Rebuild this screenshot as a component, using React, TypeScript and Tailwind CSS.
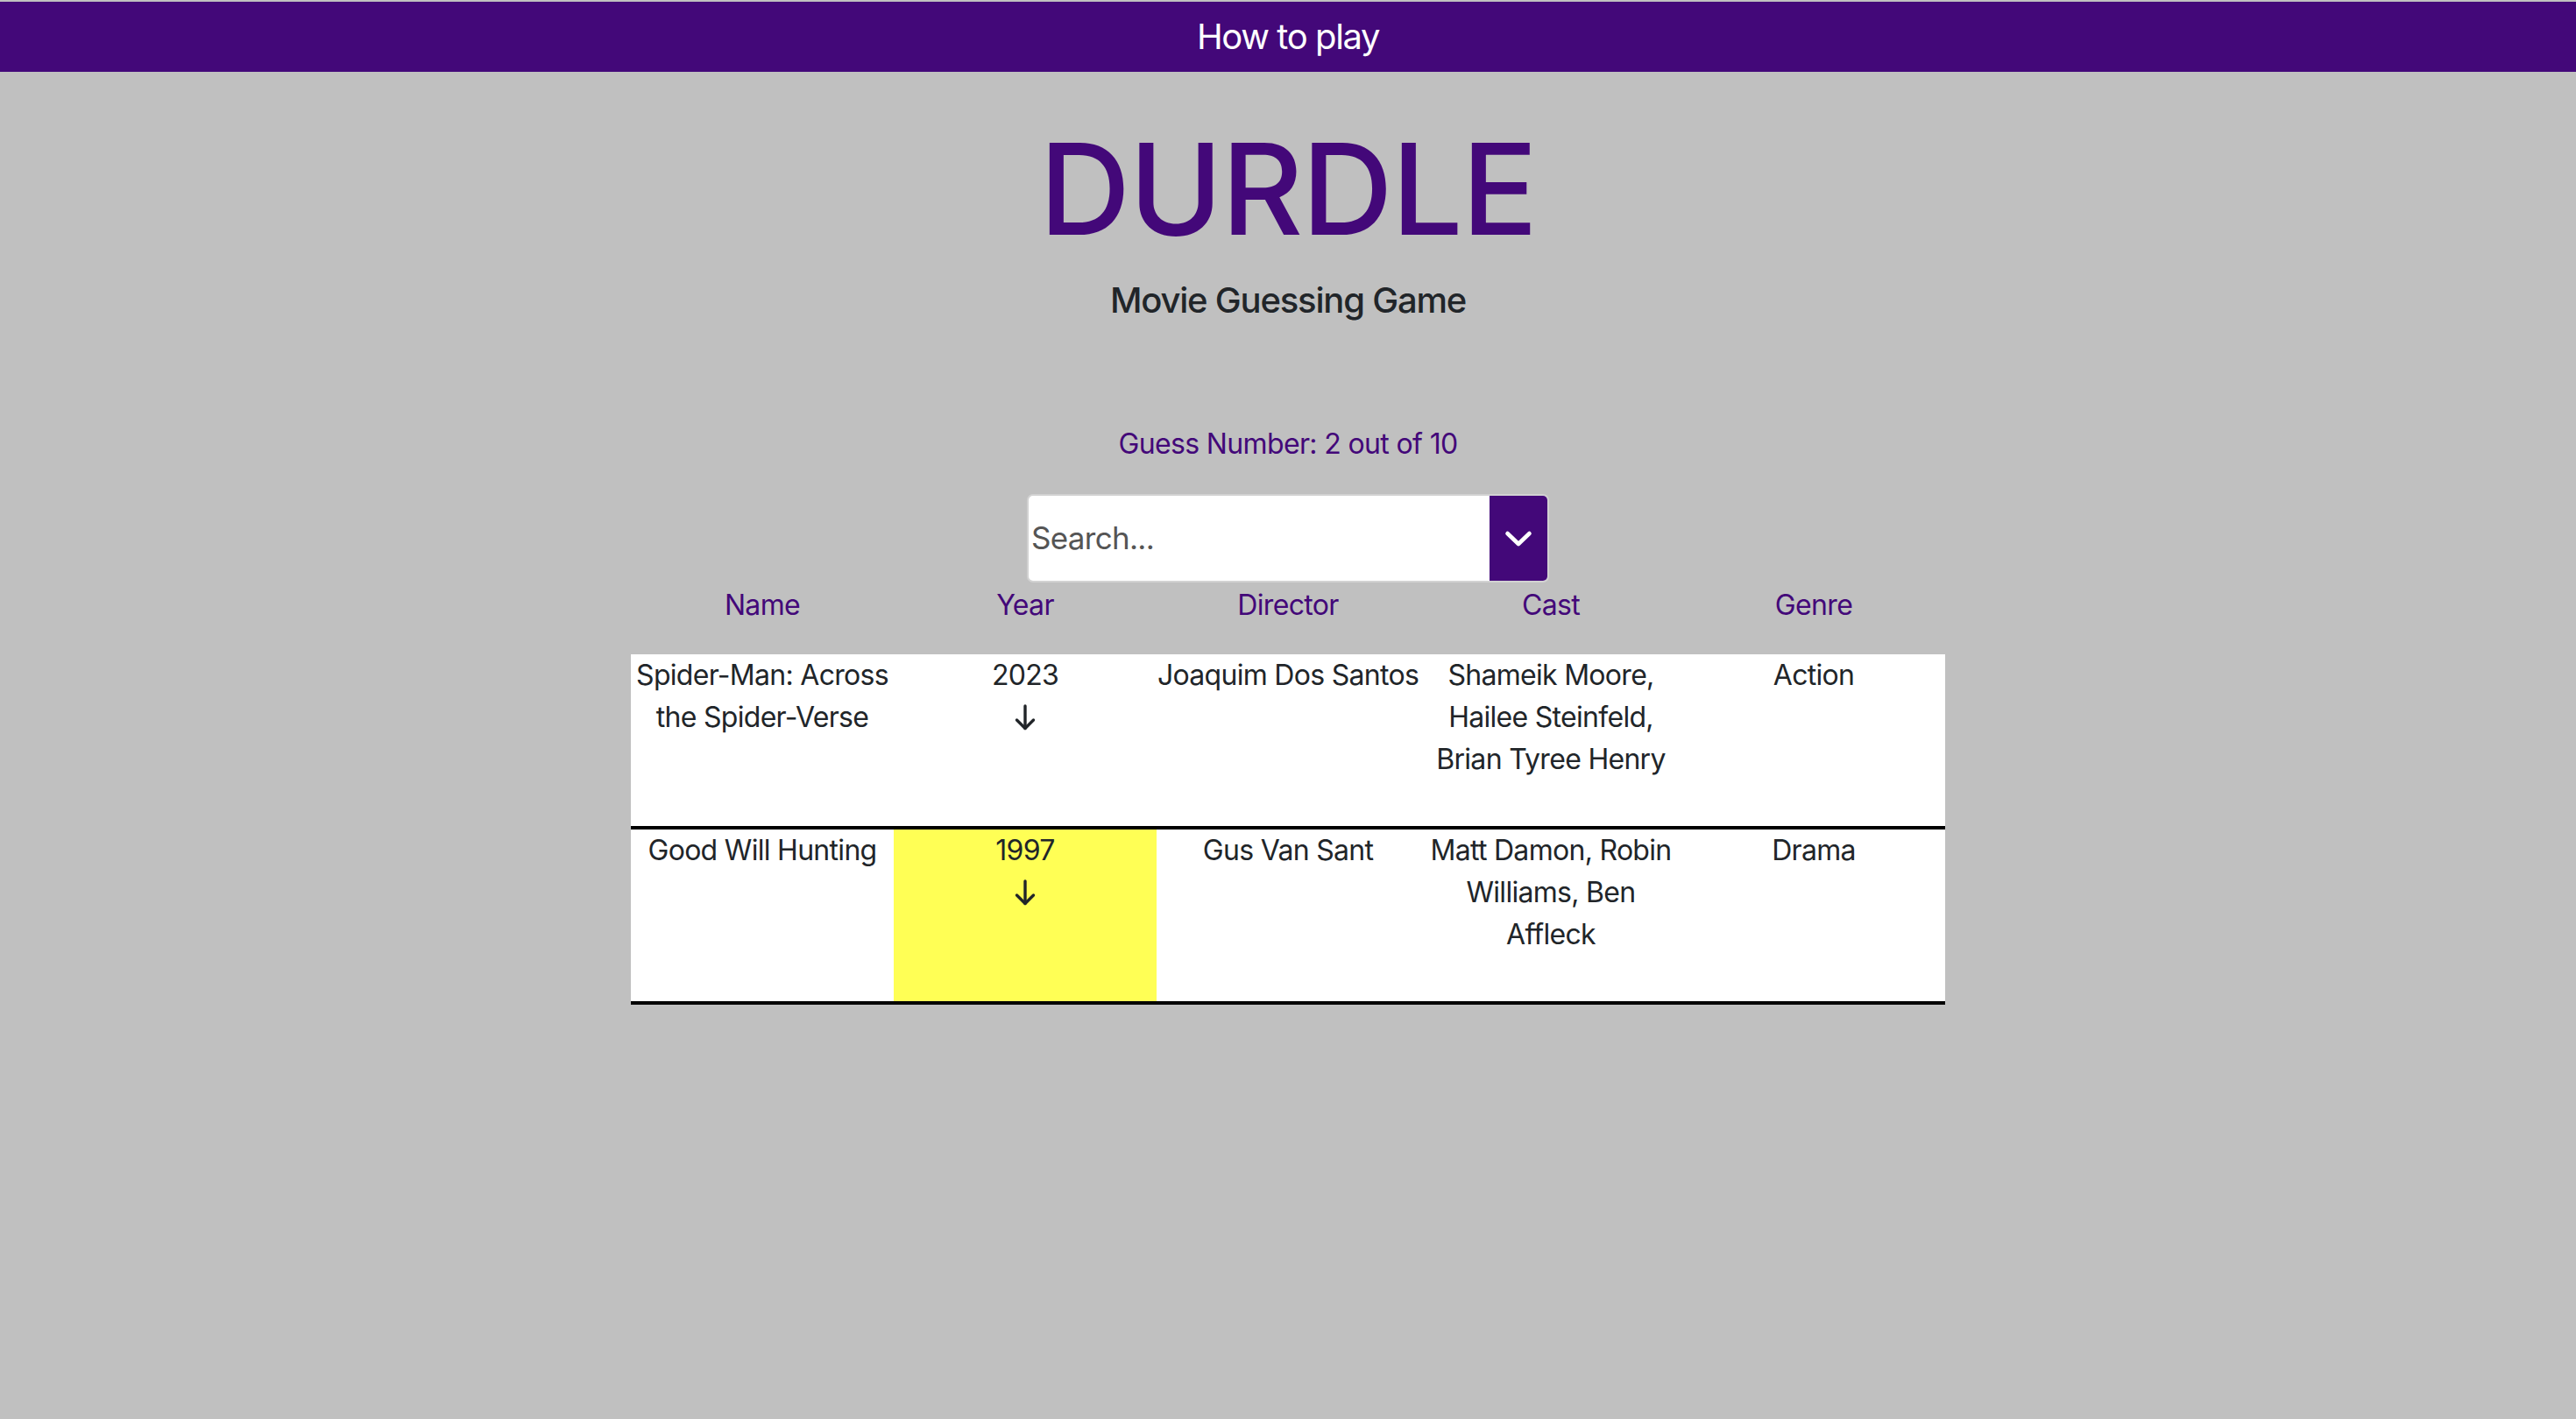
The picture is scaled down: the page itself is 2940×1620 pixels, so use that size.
import React from "react";

type Row = { name: string[]; year: string; yearYellow?: boolean; director: string[]; cast: string[]; genre: string };

const rows: Row[] = [
  {
    name: ["Spider-Man: Across", "the Spider-Verse"],
    year: "2023",
    director: ["Joaquim Dos Santos"],
    cast: ["Shameik Moore,", "Hailee Steinfeld,", "Brian Tyree Henry"],
    genre: "Action",
  },
  {
    name: ["Good Will Hunting"],
    year: "1997",
    yearYellow: true,
    director: ["Gus Van Sant"],
    cast: ["Matt Damon, Robin", "Williams, Ben", "Affleck"],
    genre: "Drama",
  },
];

function Lines({ lines }: { lines: string[] }) {
  return (
    <>
      {lines.map((l, i) => (
        <div key={i} className="whitespace-nowrap">
          {l}
        </div>
      ))}
    </>
  );
}

function Arrow() {
  return (
    <div className="flex h-[48px] items-center justify-center">
      <svg width="24" height="30" viewBox="0 0 24 30" fill="none" stroke="#212529" strokeWidth="3.4" strokeLinecap="round" strokeLinejoin="round">
        <path d="M12 2 V27.5" />
        <path d="M2.5 18 L12 27.5 L21.5 18" />
      </svg>
    </div>
  );
}

export default function App() {
  return (
    <div
      className="min-h-[1620px] w-full bg-[#c0c0c0] pt-[2px]"
      style={{ fontFamily: "Inter, 'Noto Sans', sans-serif" }}
    >
      <div className="flex h-[80px] items-center justify-center bg-[#430879] text-[40px] leading-none tracking-[-0.035em] text-white">
        How to play
      </div>

      <div className="flex flex-col items-center">
        <h1 className="mt-[62px] text-[144px] font-medium leading-none tracking-[-0.01em] text-[#430879]">
          DURDLE
        </h1>
        <div className="mt-[35px] text-[40px] font-medium leading-none tracking-[-0.03em] text-[#212529]">
          Movie Guessing Game
        </div>
        <div className="mt-[128px] text-[32px] leading-none tracking-[-0.02em] text-[#430879]">
          Guess Number: 2 out of 10
        </div>

        <div className="mt-[41px] flex h-[101px] w-[596px] overflow-hidden rounded-[7px] border-2 border-[#d2d2d2] bg-white">
          <div className="flex flex-1 items-center pl-[3px] text-[35px] tracking-[-0.02em] text-[#555555]">
            Search...
          </div>
          <div className="flex w-[66px] items-center justify-center bg-[#430879]">
            <svg width="32" height="22" viewBox="0 0 32 22" fill="none" stroke="white" strokeWidth="4.6" strokeLinecap="round" strokeLinejoin="round">
              <path d="M3.5 5 L16 17 L28.5 5" />
            </svg>
          </div>
        </div>

        <div className="mt-[10px] grid w-[1500px] grid-cols-5 text-center text-[32px] leading-none tracking-[-0.02em] text-[#430879]">
          <div>Name</div>
          <div>Year</div>
          <div>Director</div>
          <div>Cast</div>
          <div>Genre</div>
        </div>

        <div className="mt-[40px] w-[1500px] bg-white text-[32px] leading-[48px] tracking-[-0.022em] text-[#212529]">
          {rows.map((r, i) => (
            <div key={i} className="grid h-[200px] grid-cols-5 border-b-4 border-black text-center">
              <div>
                <Lines lines={r.name} />
              </div>
              <div className={r.yearYellow ? "bg-[#ffff55]" : ""}>
                <div>{r.year}</div>
                <Arrow />
              </div>
              <div>
                <Lines lines={r.director} />
              </div>
              <div>
                <Lines lines={r.cast} />
              </div>
              <div>{r.genre}</div>
            </div>
          ))}
        </div>
      </div>
    </div>
  );
}
